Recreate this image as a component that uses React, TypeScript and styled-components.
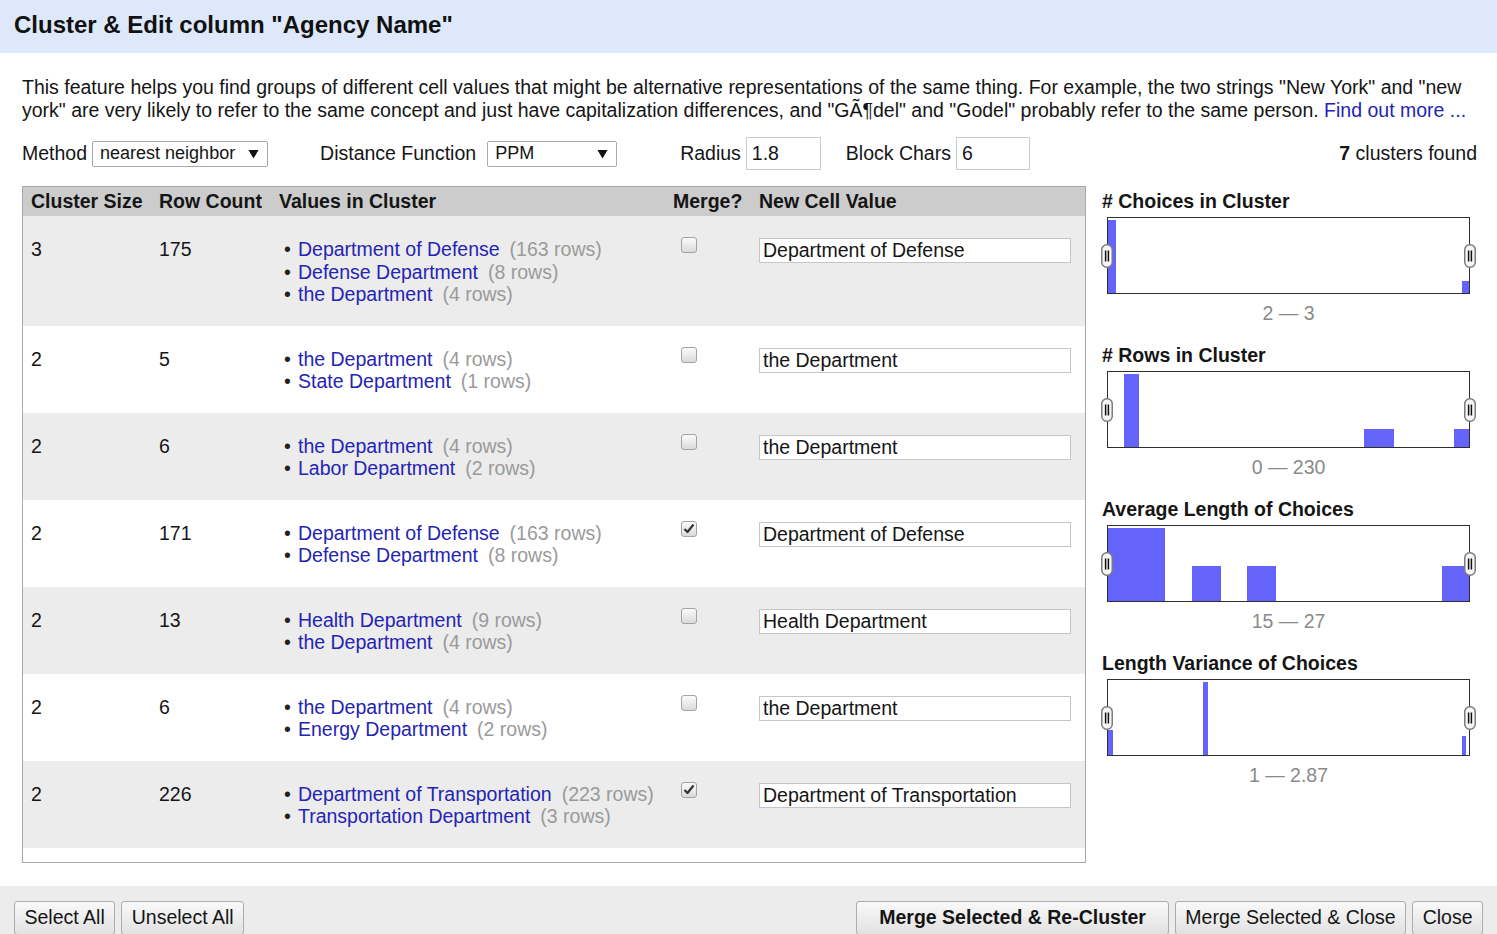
import React, { useState } from 'react'
import styled, { createGlobalStyle } from 'styled-components'

const GlobalStyle = createGlobalStyle`
  html, body {
    margin: 0;
    padding: 0;
  }
  body {
    font-family: "Liberation Sans", Arial, sans-serif;
    font-size: 19.5px;
    color: #151515;
    background: #fff;
    overflow: hidden;
  }
`

const Dialog = styled.div`
  display: flex;
  flex-direction: column;
  width: 1497px;
  height: 934px;
  overflow: hidden;
`
const TitleBar = styled.div`
  flex: none;
  height: 53px;
  box-sizing: border-box;
  display: flex;
  align-items: center;
  padding: 0 0 3px 14px;
  background: #dde9fa;
  font-size: 24px;
  font-weight: bold;
  color: #111;
`
const Body = styled.div`
  flex: 1;
  padding: 23px 22px 0 22px;
`
const Description = styled.p`
  margin: 0;
  line-height: 23px;
`
const Link = styled.a`
  color: #2424b4;
  text-decoration: none;
  cursor: pointer;
`
const Controls = styled.div`
  display: flex;
  align-items: center;
  height: 33px;
  margin-top: 15px;
`
const Field = styled.label<{ $offset?: number; $gap?: number }>`
  display: flex;
  align-items: center;
  gap: ${({ $gap }) => $gap ?? 5}px;
  margin-left: ${({ $offset }) => $offset ?? 0}px;
`
const SelectBox = styled.div<{ $width: number }>`
  display: inline-flex;
  align-items: center;
  justify-content: space-between;
  box-sizing: border-box;
  width: ${({ $width }) => $width}px;
  height: 26px;
  padding: 0 8px 0 7px;
  border: 1px solid #a9a9a9;
  border-radius: 2px;
  background: #fff;
  font-size: 18px;
`
const TextBox = styled.input<{ $width: number }>`
  box-sizing: border-box;
  width: ${({ $width }) => $width}px;
  height: 33px;
  padding: 0 5px;
  border: 1px solid #cbcbcb;
  font-family: inherit;
  font-size: 19.5px;
  color: #151515;
  outline: none;
`
const FoundCount = styled.div`
  margin-left: auto;
  margin-right: -2px;
`

const Main = styled.div`
  display: flex;
  align-items: flex-start;
  margin-top: 16px;
`
const TablePanel = styled.div`
  flex: none;
  box-sizing: border-box;
  width: 1064px;
  height: 677px;
  border: 1px solid #a8a8a8;
  overflow-y: auto;
  background: #fff;
`
const Row = styled.div<{ $shaded?: boolean; $header?: boolean }>`
  display: grid;
  grid-template-columns: 128px 120px 394px 86px 1fr;
  background: ${({ $header, $shaded }) => ($header ? '#cccccc' : $shaded ? '#ececec' : '#fff')};
`
const HeadCell = styled.div`
  padding: 0 8px;
  line-height: 29px;
  font-weight: bold;
  white-space: nowrap;
`
const Cell = styled.div`
  padding: 22px 8px 20px 8px;
  line-height: 22.5px;
`
const ValueList = styled.ul`
  margin: 0;
  padding: 0;
  list-style: none;
`
const ValueItem = styled.li`
  display: flex;
  white-space: nowrap;
  &::before {
    content: '•';
    width: 17px;
    flex: none;
    padding-right: 2px;
    text-align: center;
    color: #222;
  }
`
const RowsCount = styled.span`
  margin-left: 10px;
  color: #9a9a9a;
`
const Check = styled.span`
  display: inline-flex;
  align-items: center;
  justify-content: center;
  box-sizing: border-box;
  width: 16px;
  height: 16px;
  margin: -1px 0 0 8px;
  vertical-align: top;
  border: 1px solid #a3a3a3;
  border-radius: 3px;
  background: linear-gradient(#fbfbfb, #dadada);
  cursor: pointer;
`
const CellInput = styled.input`
  box-sizing: border-box;
  width: 312px;
  height: 25px;
  padding: 0 3px;
  border: 1px solid #c6c6c6;
  font-family: inherit;
  font-size: 19.5px;
  color: #151515;
  background: #fff;
  outline: none;
`

const Sidebar = styled.div`
  flex: none;
  width: 376px;
  margin-left: 14px;
  padding-top: 4px;
`
const HistBlock = styled.div`
  margin-bottom: 19px;
`
const HistTitle = styled.div`
  padding-left: 2px;
  line-height: 23px;
  font-weight: bold;
`
const HistFrame = styled.div`
  position: relative;
  box-sizing: border-box;
  width: 363px;
  height: 77px;
  margin: 4px 0 0 7px;
  border: 1px solid #2e2e2e;
  background: #fff;
  svg.bars {
    display: block;
  }
`
const Handle = styled.span<{ $side: 'left' | 'right' }>`
  position: absolute;
  top: 50%;
  ${({ $side }) => $side}: -7px;
  width: 12px;
  height: 24px;
  transform: translateY(-50%);
  svg {
    display: block;
  }
`
const RangeLabel = styled.div`
  width: 363px;
  margin: 8px 0 0 7px;
  line-height: 23px;
  text-align: center;
  color: #8a8a8a;
`

const Footer = styled.div`
  flex: none;
  height: 48px;
  box-sizing: border-box;
  display: flex;
  justify-content: space-between;
  align-items: flex-start;
  padding: 15px 14px 0 14px;
  background: #ececec;
`
const ButtonGroup = styled.div`
  display: flex;
  gap: 6px;
`
const Button = styled.button<{ $primary?: boolean }>`
  height: 34px;
  padding: 0 ${({ $primary }) => ($primary ? 22 : 9.5)}px 2px;
  border: 1px solid #adadad;
  border-radius: 3px;
  background: linear-gradient(#f9f9f9, #e1e1e1);
  font-family: inherit;
  font-size: 19.5px;
  font-weight: ${({ $primary }) => ($primary ? 'bold' : 'normal')};
  color: #151515;
  cursor: pointer;
`

type Cluster = {
  size: number
  count: number
  values: [string, number][]
  merge: boolean
  newValue: string
}

const CLUSTERS: Cluster[] = [
  { size: 3, count: 175, values: [['Department of Defense', 163], ['Defense Department', 8], ['the Department', 4]], merge: false, newValue: 'Department of Defense' },
  { size: 2, count: 5, values: [['the Department', 4], ['State Department', 1]], merge: false, newValue: 'the Department' },
  { size: 2, count: 6, values: [['the Department', 4], ['Labor Department', 2]], merge: false, newValue: 'the Department' },
  { size: 2, count: 171, values: [['Department of Defense', 163], ['Defense Department', 8]], merge: true, newValue: 'Department of Defense' },
  { size: 2, count: 13, values: [['Health Department', 9], ['the Department', 4]], merge: false, newValue: 'Health Department' },
  { size: 2, count: 6, values: [['the Department', 4], ['Energy Department', 2]], merge: false, newValue: 'the Department' },
  { size: 2, count: 226, values: [['Department of Transportation', 223], ['Transportation Department', 3]], merge: true, newValue: 'Department of Transportation' },
]

// bars as [x, y, w, h] inside a 361x75 plot
const HISTOGRAMS: { title: string; range: string; bars: number[][] }[] = [
  { title: '# Choices in Cluster', range: '2 — 3', bars: [[0, 2, 8, 73], [354, 63, 7, 12]] },
  { title: '# Rows in Cluster', range: '0 — 230', bars: [[16, 2, 15, 73], [256, 57, 30, 18], [346, 57, 15, 18]] },
  { title: 'Average Length of Choices', range: '15 — 27', bars: [[0, 2, 57, 73], [84, 40, 29, 35], [139, 40, 29, 35], [334, 40, 27, 35]] },
  { title: 'Length Variance of Choices', range: '1 — 2.87', bars: [[0, 50, 5, 25], [95, 2, 5, 73], [354, 56, 4, 19]] },
]

function Arrow() {
  return (
    <svg width="11" height="10" viewBox="0 0 11 10">
      <polygon points="0.5,1 10.5,1 5.5,9.5" fill="#111" />
    </svg>
  )
}

function CheckBox({ checked, onToggle }: { checked: boolean; onToggle: () => void }) {
  return (
    <Check role="checkbox" aria-checked={checked} onClick={onToggle}>
      {checked && (
        <svg width="12" height="11" viewBox="0 0 12 11">
          <path d="M1.5 6 L4.5 9 L10.5 1.5" fill="none" stroke="#333" strokeWidth="2.2" strokeLinejoin="round" />
        </svg>
      )}
    </Check>
  )
}

function SliderHandle({ side }: { side: 'left' | 'right' }) {
  return (
    <Handle $side={side}>
      <svg width="12" height="24" viewBox="0 0 12 24">
        <rect x="0.75" y="0.75" width="10.5" height="22.5" rx="5" fill="#f6f6f6" stroke="#7c7c7c" strokeWidth="1.5" />
        <line x1="4.6" y1="6.5" x2="4.6" y2="17.5" stroke="#111" strokeWidth="1.5" />
        <line x1="7.4" y1="6.5" x2="7.4" y2="17.5" stroke="#111" strokeWidth="1.5" />
      </svg>
    </Handle>
  )
}

function ClusterRow({ cluster, shaded }: { cluster: Cluster; shaded: boolean }) {
  const [merge, setMerge] = useState(cluster.merge)
  return (
    <Row $shaded={shaded}>
      <Cell>{cluster.size}</Cell>
      <Cell>{cluster.count}</Cell>
      <Cell>
        <ValueList>
          {cluster.values.map(([name, rows], i) => (
            <ValueItem key={i}>
              <Link>{name}</Link>
              <RowsCount>({rows} rows)</RowsCount>
            </ValueItem>
          ))}
        </ValueList>
      </Cell>
      <Cell>
        <CheckBox checked={merge} onToggle={() => setMerge(!merge)} />
      </Cell>
      <Cell>
        <CellInput defaultValue={cluster.newValue} />
      </Cell>
    </Row>
  )
}

export default function App() {
  return (
    <>
      <GlobalStyle />
      <Dialog>
        <TitleBar>Cluster &amp; Edit column "Agency Name"</TitleBar>
        <Body>
          <Description>
            This feature helps you find groups of different cell values that might be alternative representations of the
            same thing. For example, the two strings "New York" and "new york" are very likely to refer to the same concept
            and just have capitalization differences, and "GÃ¶del" and "Godel" probably refer to the same person.{' '}
            <Link>Find out more ...</Link>
          </Description>
          <Controls>
            <Field>
              Method
              <SelectBox $width={176}>
                nearest neighbor <Arrow />
              </SelectBox>
            </Field>
            <Field $offset={52} $gap={11}>
              Distance Function
              <SelectBox $width={130}>
                PPM <Arrow />
              </SelectBox>
            </Field>
            <Field $offset={63}>
              Radius
              <TextBox $width={75} defaultValue="1.8" />
            </Field>
            <Field $offset={25}>
              Block Chars
              <TextBox $width={74} defaultValue="6" />
            </Field>
            <FoundCount>
              <b>7</b> clusters found
            </FoundCount>
          </Controls>
          <Main>
            <TablePanel>
              <Row $header>
                <HeadCell>Cluster Size</HeadCell>
                <HeadCell>Row Count</HeadCell>
                <HeadCell>Values in Cluster</HeadCell>
                <HeadCell>Merge?</HeadCell>
                <HeadCell>New Cell Value</HeadCell>
              </Row>
              {CLUSTERS.map((c, i) => (
                <ClusterRow key={i} cluster={c} shaded={i % 2 === 0} />
              ))}
            </TablePanel>
            <Sidebar>
              {HISTOGRAMS.map((h) => (
                <HistBlock key={h.title}>
                  <HistTitle>{h.title}</HistTitle>
                  <HistFrame>
                    <svg className="bars" width="361" height="75" viewBox="0 0 361 75">
                      {h.bars.map(([x, y, w, bh], i) => (
                        <rect key={i} x={x} y={y} width={w} height={bh} fill="#6464fa" />
                      ))}
                    </svg>
                    <SliderHandle side="left" />
                    <SliderHandle side="right" />
                  </HistFrame>
                  <RangeLabel>{h.range}</RangeLabel>
                </HistBlock>
              ))}
            </Sidebar>
          </Main>
        </Body>
        <Footer>
          <ButtonGroup>
            <Button>Select All</Button>
            <Button>Unselect All</Button>
          </ButtonGroup>
          <ButtonGroup>
            <Button $primary>Merge Selected &amp; Re-Cluster</Button>
            <Button>Merge Selected &amp; Close</Button>
            <Button>Close</Button>
          </ButtonGroup>
        </Footer>
      </Dialog>
    </>
  )
}
